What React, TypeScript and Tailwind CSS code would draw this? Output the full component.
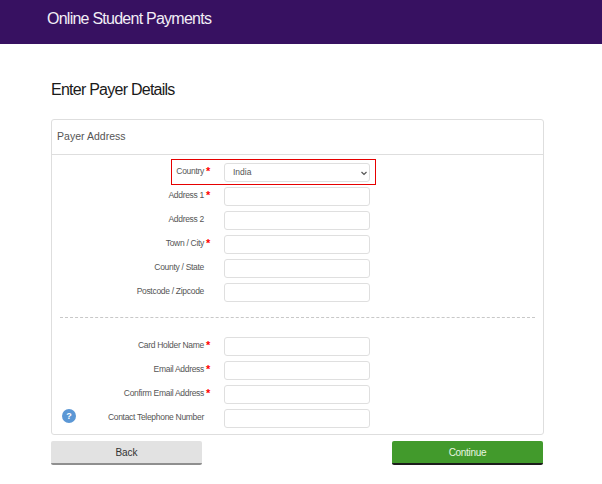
import React from "react";

function Row({ label, req, help, children }: { label: string; req?: boolean; help?: boolean; children?: React.ReactNode }) {
  return (
    <div className="relative flex h-[24px] items-start">
      {help && (
        <div className="absolute left-[10px] top-[0px] flex h-[14px] w-[14px] items-center justify-center rounded-full bg-[#5b97d5] text-[9px] font-bold leading-none text-white">?</div>
      )}
      <div className="w-[152px] pt-[2px] text-right text-[8.5px] leading-[12px] tracking-[-0.3px] text-[#555]">{label}</div>
      <div className="w-[20px] pl-[2px] pt-[2px] text-[11px] leading-[12px] font-bold text-[#f00]">{req ? "*" : ""}</div>
      {children ?? <div className="h-[19px] w-[146px] rounded-[3px] border border-[#dfdfdf] bg-white" />}
    </div>
  );
}

export default function App() {
  return (
    <div className="h-[484px] w-[602px] overflow-hidden bg-white font-['Liberation_Sans',Arial,sans-serif]">
      <div className="h-[44px] bg-[#371161] pl-[47px] pt-[10px] text-[16px] leading-[18px] tracking-[-0.75px] text-[#f2eef6]">Online Student Payments</div>
      <div className="px-[51px]">
        <h1 className="mt-[36px] text-[16px] leading-[20px] tracking-[-0.75px] text-[#1a1a1a]">Enter Payer Details</h1>
        <div className="mt-[19px] h-[316px] w-[493px] rounded-[3px] border border-[#dedede]">
          <div className="h-[35px] border-b border-[#dedede] pl-[5px] pt-[10px] text-[10.5px] leading-[13px] tracking-[0.02px] text-[#555]">Payer Address</div>
          <div className="pt-[8px]">
            <div className="relative">
              <div className="pointer-events-none absolute left-[119px] top-[-4px] h-[26px] w-[205px] border border-[#e60000]" />
              <Row label="Country" req>
                <div className="flex h-[19px] w-[146px] items-center justify-between rounded-[3px] border border-[#dfdfdf] bg-white pl-[8px] pr-[1px] text-[8.5px] text-[#555]">
                  <span>India</span>
                  <svg width="8" height="8" viewBox="0 0 8 8" fill="none" stroke="#555" strokeWidth="1.2"><path d="M1.5 3l2.5 2.5L6.5 3" /></svg>
                </div>
              </Row>
            </div>
            <Row label="Address 1" req />
            <Row label="Address 2" />
            <Row label="Town / City" req />
            <Row label="County / State" />
            <Row label="Postcode / Zipcode" />
          </div>
          <div className="mx-[8px] mt-[10px] border-t border-dashed border-[#c8c8c8]" />
          <div className="pt-[19px]">
            <Row label="Card Holder Name" req />
            <Row label="Email Address" req />
            <Row label="Confirm Email Address" req />
            <Row label="Contact Telephone Number" help />
          </div>
        </div>
        <div className="mt-[6px] flex w-[492px] justify-between">
          <div className="flex h-[24px] w-[151px] items-center justify-center rounded-[2px] border-b-2 border-[#8f8f8f] bg-[#e2e2e2] text-[10px] text-[#333]">Back</div>
          <div className="flex h-[24px] w-[151px] items-center justify-center rounded-[2px] border-b-2 border-[#1c1c1c] bg-[#429a2c] text-[10px] tracking-[-0.3px] text-[#e8f5e0]">Continue</div>
        </div>
      </div>
    </div>
  );
}
